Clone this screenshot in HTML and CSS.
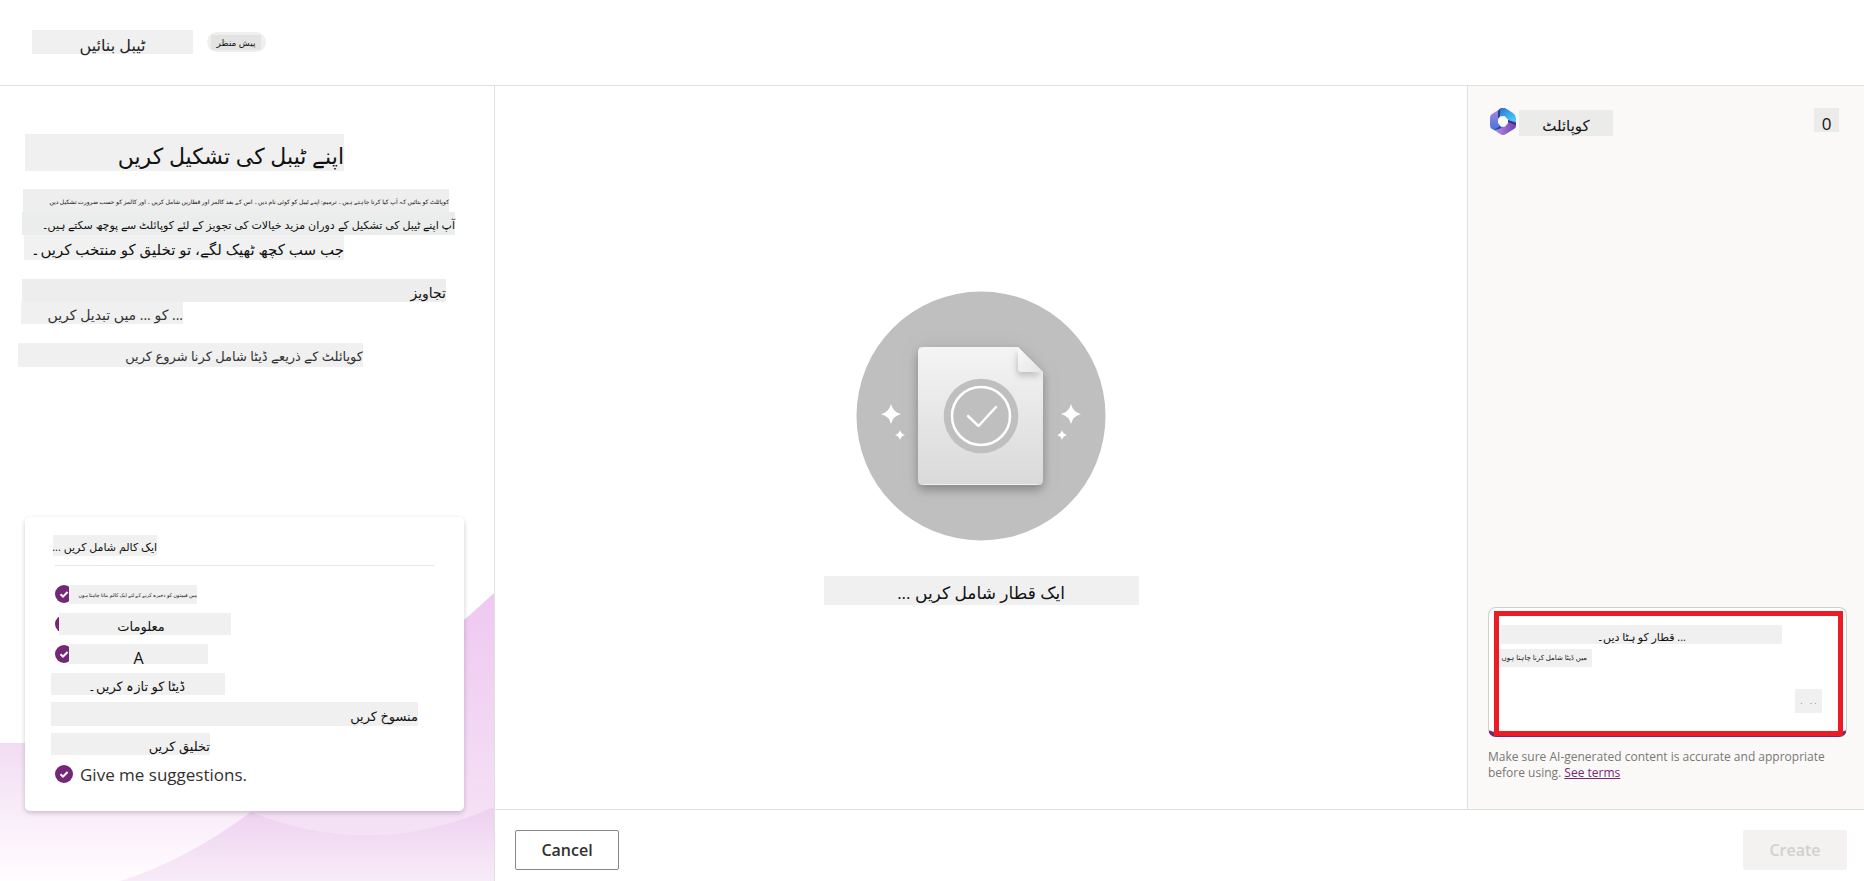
FILE: index.html
```
<!DOCTYPE html>
<html lang="ur">
<head>
<meta charset="utf-8">
<title>ٹیبل بنائیں</title>
<link rel="stylesheet" href="styles.css">
</head>
<body>
<svg class="defs" aria-hidden="true">
  <symbol id="tick" viewBox="0 0 18 18"><circle cx="9" cy="9" r="9" fill="#742774"/><path d="M5.5 9.2 8 11.6 12.6 7" fill="none" stroke="#fff" stroke-width="2"/></symbol>
</svg>
<header class="topbar">
  <h1 class="tag title" dir="rtl">ٹیبل بنائیں</h1>
  <span class="pill"><span class="pill-text" dir="rtl">پیش منظر</span></span>
</header>
<div class="body">
  <aside class="side">
    <svg class="waves" viewBox="0 0 494 288" preserveAspectRatio="none" aria-hidden="true">
      <defs>
        <linearGradient id="w1" x1="0" y1="0" x2="0" y2="1"><stop offset="0" stop-color="#f2dcf3"/><stop offset="1" stop-color="#fffdff"/></linearGradient>
        <linearGradient id="w2" x1="0" y1="0" x2="0" y2="1"><stop offset="0" stop-color="#efc8f1"/><stop offset="1" stop-color="#f5e3f6"/></linearGradient>
        <linearGradient id="w3" x1="0" y1="0" x2="0" y2="1"><stop offset="0" stop-color="#edd0ef"/><stop offset="1" stop-color="#f8ecf9"/></linearGradient>
      </defs>
      <path d="M0 150H300V288H0Z" fill="url(#w1)"/>
      <path d="M494 0V250H251V218Q350 150 464 27Q480 13 494 0Z" fill="url(#w2)"/>
      <path d="M120 288Q185 268 251 219Q373 268 494 214V288Z" fill="url(#w3)"/>
    </svg>
    <section class="intro">
      <h2 class="tag heading" dir="rtl">اپنے ٹیبل کی تشکیل کریں</h2>
      <p class="tag tiny-line" dir="rtl">کوپائلٹ کو بتائیں کہ آپ کیا کرنا چاہتے ہیں۔ ترمیم: اپنے ٹیبل کو کوئی نام دیں۔ اس کے بعد کالمز اور قطاریں شامل کریں۔ اور کالمز کو حسب ضرورت تشکیل دیں</p>
      <p class="tag ask-line" dir="rtl">آپ اپنے ٹیبل کی تشکیل کے دوران مزید خیالات کی تجویز کے لئے کوپائلٹ سے پوچھ سکتے ہیں۔</p>
      <p class="tag done-line" dir="rtl">جب سب کچھ ٹھیک لگے، تو تخلیق کو منتخب کریں۔</p>
      <h3 class="tag sug-title" dir="rtl">تجاویز</h3>
      <p class="tag sug-replace" dir="rtl">... کو ... میں تبدیل کریں</p>
      <p class="tag sug-start" dir="rtl">کوپائلٹ کے ذریعے ڈیٹا شامل کرنا شروع کریں</p>
    </section>
    <section class="card">
      <h3 class="card-head"><span class="tag card-title" dir="rtl">ایک کالم شامل کریں ...</span></h3>
      <ul class="rows">
        <li class="row"><svg class="tick"><use href="#tick"/></svg><span class="tag r1" dir="rtl">میں قیمتوں کو ذخیرہ کرنے کے لئے ایک کالم بنانا چاہتا ہوں</span></li>
        <li class="row"><svg class="tick"><use href="#tick"/></svg><span class="tag r2" dir="rtl">معلومات</span></li>
        <li class="row"><svg class="tick"><use href="#tick"/></svg><span class="tag r3">A</span></li>
        <li class="row"><span class="tag r4" dir="rtl">ڈیٹا کو تازہ کریں۔</span></li>
        <li class="row"><span class="tag r5" dir="rtl">منسوخ کریں</span></li>
        <li class="row"><span class="tag r6" dir="rtl">تخلیق کریں</span></li>
        <li class="row"><svg class="tick"><use href="#tick"/></svg><span class="r7">Give me suggestions.</span></li>
      </ul>
    </section>
  </aside>
  <div class="work">
    <div class="stage">
      <main class="canvas">
        <svg class="hero" viewBox="0 0 250 250" aria-hidden="true">
          <defs>
            <linearGradient id="pg" x1="0" y1="0" x2="0" y2="1"><stop offset="0" stop-color="#f4f4f4"/><stop offset="1" stop-color="#d9d9d9"/></linearGradient>
            <linearGradient id="fg" x1="0" y1="0" x2="1" y2="1"><stop offset="0" stop-color="#fafafa"/><stop offset="1" stop-color="#e4e4e4"/></linearGradient>
            <filter id="sh" x="-30%" y="-30%" width="160%" height="160%"><feDropShadow dx="0" dy="5" stdDeviation="5" flood-opacity=".25"/><feDropShadow dx="0" dy="0" stdDeviation="9" flood-opacity=".08"/></filter>
            <filter id="fs" x="-40%" y="-40%" width="180%" height="200%"><feDropShadow dx="-1" dy="4" stdDeviation="3" flood-opacity=".2"/></filter>
            <clipPath id="pc"><path d="M67 56H162L187 81V189Q187 194 182 194H67Q62 194 62 189V61Q62 56 67 56Z"/></clipPath>
          </defs>
          <circle cx="125" cy="125" r="124.500" fill="#bfbfbf"/>
          <path d="M67 56H162L187 81V189Q187 194 182 194H67Q62 194 62 189V61Q62 56 67 56Z" fill="url(#pg)" filter="url(#sh)"/>
          <path d="M67 193.500H182" stroke="#f0f0f0" stroke-width="1"/>
          <g clip-path="url(#pc)"><path d="M162 56V77Q162 81 166 81H187Z" fill="url(#fg)" filter="url(#fs)"/></g>
          <circle cx="125" cy="125" r="37.300" fill="#bfbfbf"/>
          <circle cx="125" cy="125" r="29" fill="none" stroke="#fff" stroke-width="2.500"/>
          <path d="M112 125 122.500 135 140 116" fill="none" stroke="#fff" stroke-width="2.500" stroke-linecap="round" stroke-linejoin="round"/>
          <g fill="#fff">
            <path d="M35 113Q37 121 45 123Q37 125 35 133Q33 125 25 123Q33 121 35 113Z"/>
            <path d="M44 139Q45 143 49 144Q45 145 44 149Q43 145 39 144Q43 143 44 139Z"/>
            <path d="M215 113Q217 121 225 123Q217 125 215 133Q213 125 205 123Q213 121 215 113Z"/>
            <path d="M206 139Q207 143 211 144Q207 145 206 149Q205 145 201 144Q205 143 206 139Z"/>
          </g>
        </svg>
        <p class="tag hero-text" dir="rtl">ایک قطار شامل کریں ...</p>
      </main>
      <aside class="copilot">
        <div class="cp-head">
          <svg class="logo" viewBox="0 0 26 27" aria-hidden="true">
            <defs>
              <linearGradient id="l1" x1="0" y1="0" x2="0" y2="1"><stop offset="0" stop-color="#b987e2"/><stop offset="1" stop-color="#3a74dc"/></linearGradient>
              <linearGradient id="l2" x1="0" y1="0" x2="1" y2="1"><stop offset="0" stop-color="#2f68cf"/><stop offset="1" stop-color="#4be0ff"/></linearGradient>
              <linearGradient id="l3" x1="0" y1="0" x2="1" y2="0"><stop offset="0" stop-color="#c18be8"/><stop offset="1" stop-color="#6a44b0"/></linearGradient>
            </defs>
            <path d="M13 0Q11 0 10 1L2 6Q0 7 0 10V17Q0 20 2 21L6 23 13 20V8L8 9Z" fill="url(#l1)"/>
            <path d="M8 9V3Q9 1 11 0H15L23 5Q26 7 26 10V15L18 12 13 8Z" fill="url(#l2)"/>
            <path d="M8 9V3L10 1V9L8 11Z" fill="#2a3f8c"/>
            <path d="M26 14V18Q26 20 24 21L16 26Q13 28 10 26L4 22 13 19 18 12Z" fill="url(#l3)"/>
            <path d="M4 22 10 18 12 19Q9 22 4 22Z" fill="#1f4aa8"/>
            <path d="M18 12 26 15.500V17L18 14Z" fill="#3b2a78"/>
            <path d="M13 8.200H15L18 12V15L15 18.800H11L8 15V11L10 8.500Z" fill="#faf9f8"/>
          </svg>
          <h2 class="tag cp-title" dir="rtl">کوپائلٹ</h2>
          <button class="tag cp-zero">0</button>
        </div>
        <div class="cp-foot">
          <div class="prompt">
            <div class="mark" role="textbox" tabindex="0">
              <p class="tag m1" dir="rtl">... قطار کو ہٹا دیں۔</p>
              <p class="tag m2" dir="rtl">میں ڈیٹا شامل کرنا چاہتا ہوں</p>
              <button class="tag m3">. &nbsp; . .</button>
            </div>
          </div>
          <p class="note" lang="en">Make sure AI-generated content is accurate and appropriate before using. <a href="#">See terms</a></p>
        </div>
      </aside>
    </div>
    <footer class="actions">
      <button class="btn">Cancel</button>
      <button class="btn primary" disabled>Create</button>
    </footer>
  </div>
</div>
</body>
</html>
```
FILE: styles.css
```
* { box-sizing: border-box; }
body {
  margin: 0;
  min-height: 100vh;
  display: flex;
  flex-direction: column;
  background: #fff;
  color: #111;
  font-family: "Open Sans", "Noto Sans", "DejaVu Sans", sans-serif;
  font-size: 13px;
}
h1, h2, h3, p, ul { margin: 0; padding: 0; font-weight: 400; }
button { border: 0; font-family: inherit; color: inherit; }
.defs { display: none; }
.tag { display: block; background: #f0f0f0; white-space: nowrap; }

.topbar {
  display: flex;
  align-items: flex-start;
  gap: 14px;
  height: 86px;
  padding: 30px 32px 0;
  border-bottom: 1px solid #e1dfdd;
}
.title { width: 161px; height: 24px; font-size: 16px; line-height: 30px; text-align: center; color: #222; }
.pill { margin-top: 2px; width: 59px; height: 20px; padding: 3px 4px 3px; border-radius: 10px; background: #efefef; }
.pill-text { display: block; width: 50px; height: 15px; background: #e3e3e3; font-size: 9px; line-height: 16px; text-align: center; }

.body { flex: 1; display: flex; }
.side {
  position: relative;
  width: 495px;
  flex: none;
  display: flex;
  flex-direction: column;
  justify-content: space-between;
  padding: 48px 30px 70px 18px;
  border-right: 1px solid #e1dfdd;
}
.waves { position: absolute; left: 0; bottom: 0; width: 100%; height: 288px; }
.intro { display: flex; flex-direction: column; align-items: flex-start; }
.heading { margin-left: 7px; width: 319px; height: 37px; font-size: 22px; line-height: 42px; }
.tiny-line { margin: 18px 0 0 5px; width: 426px; height: 23px; font-size: 6px; line-height: 26px; background: #eee; }
.ask-line { margin-left: 4px; width: 433px; height: 23px; font-size: 11px; line-height: 26px; background: #ebedec; }
.done-line { margin-left: 6px; width: 320px; height: 25px; font-size: 15px; line-height: 28px; background: #f1f1f1; }
.sug-title { margin: 19px 0 0 4px; width: 424px; height: 23px; font-size: 14px; line-height: 28px; background: #ededed; }
.sug-replace { margin-left: 3px; width: 162px; height: 22px; font-size: 14px; line-height: 26px; color: #333; }
.sug-start { margin-top: 19px; width: 345px; height: 24px; font-size: 13px; line-height: 26px; color: #333; }

.card {
  position: relative;
  margin-left: 7px;
  padding: 18px 30px 22px;
  border-radius: 5px;
  background: #fff;
  box-shadow: 0 2px 5px rgba(0, 0, 0, .2);
}
.card-head { height: 31px; border-bottom: 1px solid #e6e6e6; }
.card-title { width: 104px; height: 21px; margin-left: -2px; font-size: 11px; line-height: 24px; }
.rows { list-style: none; padding-top: 13px; }
.row { display: flex; align-items: center; height: 30px; }
.row .tag { height: 22px; margin-left: -4px; }
.tick { flex: none; width: 18px; height: 18px; }
.row .r1 { width: 128px; height: 19px; font-size: 5px; line-height: 20px; }
.row .r2 { width: 172px; margin-left: -14px; padding-right: 8px; font-size: 13px; line-height: 26px; text-align: center; }
.row .r3 { width: 139px; height: 20px; font-size: 16px; line-height: 28px; text-align: center; }
.row .r4 { width: 174px; padding-right: 40px; font-size: 13px; line-height: 26px; }
.row .r5 { width: 367px; height: 24px; font-size: 13px; line-height: 28px; }
.row .r6 { width: 159px; font-size: 13px; line-height: 26px; }
.r7 { margin-left: 7px; font-size: 17px; color: #323130; }

.work { flex: 1; min-width: 0; display: flex; flex-direction: column; }
.stage { flex: 1; display: flex; }
.canvas { flex: 1; display: flex; flex-direction: column; align-items: center; justify-content: center; }
.hero { width: 250px; height: 250px; }
.hero-text { margin-top: 35px; width: 315px; height: 29px; font-size: 17px; line-height: 34px; text-align: center; }

.copilot {
  width: 397px;
  flex: none;
  display: flex;
  flex-direction: column;
  justify-content: space-between;
  padding: 22px 17px 28px 20px;
  border-left: 1px solid #e1dfdd;
  background: #faf9f8;
}
.cp-head { display: flex; align-items: flex-start; gap: 3px; padding: 0 8px 0 2px; }
.logo { width: 26px; height: 27px; }
.cp-title { margin-top: 2px; width: 94px; height: 26px; font-size: 15px; line-height: 30px; text-align: center; background: #ebebea; }
.cp-zero { margin-left: auto; width: 25px; height: 24px; padding: 6px 0 0; font-size: 17px; line-height: 20px; background: #ebebea; }
.prompt {
  height: 130px;
  padding: 3px 3px 1px 5px;
  border: 1px solid #d2d0ce;
  border-bottom: 5px solid #742774;
  border-radius: 8px;
  background: #fff;
}
.mark { height: 125px; padding: 9px 0; border: 5px solid #ec1c24; display: flex; flex-direction: column; align-items: flex-start; }
.m1 { margin-left: 2px; width: 281px; height: 19px; font-size: 11px; line-height: 24px; text-align: center; }
.m2 { margin-top: 5px; width: 93px; height: 18px; padding-right: 5px; font-size: 7px; line-height: 18px; }
.m3 { align-self: flex-end; margin: 22px 16px 0 0; width: 27px; height: 24px; padding: 0; font-size: 9px; line-height: 16px; color: #888; }
.note { margin-top: 12px; font-size: 12px; line-height: 16px; color: #797775; }
.note a { color: #742774; }

.actions {
  display: flex;
  justify-content: space-between;
  align-items: flex-start;
  height: 72px;
  padding: 20px 17px 0 20px;
  border-top: 1px solid #e1dfdd;
}
.btn { width: 104px; height: 40px; border: 1px solid #8a8886; border-radius: 2px; background: #fff; font-size: 16px; font-weight: 600; color: #323130; }
.primary { border-color: #f3f2f1; background: #f3f2f1; color: #d2d0ce; }
```
